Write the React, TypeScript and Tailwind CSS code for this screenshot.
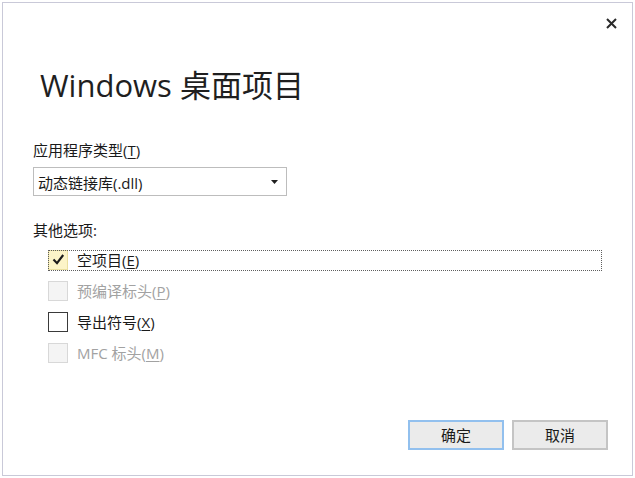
import React from "react";

type Opt = { label: string; key: string; checked?: boolean; disabled?: boolean; focus?: boolean };

const options: Opt[] = [
  { label: "空项目", key: "E", checked: true, focus: true },
  { label: "预编译标头", key: "P", disabled: true },
  { label: "导出符号", key: "X" },
  { label: "MFC 标头", key: "M", disabled: true },
];

function Row({ o }: { o: Opt }) {
  const boxCls = o.checked
    ? "w-[20px] h-[20px] border border-[#eadf9f] bg-[#fcf4c8] flex items-center justify-center"
    : o.disabled
    ? "w-[20px] h-[20px] border border-[#d8d8d8] bg-[#f4f4f4]"
    : "w-[20px] h-[20px] border border-[#3a3a3a] bg-white";
  return (
    <div className="relative h-[21px] flex items-start">
      <div className={boxCls}>
        {o.checked && (
          <svg width="18" height="18" viewBox="0 0 18 18">
            <path d="M4.5 8.6L8 12.2L14.2 4" fill="none" stroke="#1b1b1b" strokeWidth="2.1" />
          </svg>
        )}
      </div>
      <div
        className={
          "ml-[9px] text-[15px] leading-[20px] " + (o.disabled ? "text-[#a2a2a2]" : "text-[#1a1a1a]")
        }
      >
        {o.label}(<span className="underline underline-offset-2">{o.key}</span>)
      </div>
      {o.focus && (
        <div className="absolute left-0 top-0 w-[554px] h-[21px] border border-dotted border-[#5e5e5e] pointer-events-none" />
      )}
    </div>
  );
}

export default function App() {
  return (
    <div className="w-[635px] h-[478px] bg-white p-[2px] font-['Open_Sans','Noto_Sans_CJK_SC',sans-serif] text-[#1a1a1a]">
      <div className="w-[631px] h-[474px] border border-[#c9c9d8] flex flex-col">
        <div className="flex justify-end pt-[15px] pr-[15px]">
          <svg width="11" height="11" viewBox="0 0 11 11">
            <path d="M1 1L10 10M10 1L1 10" stroke="#2a2a2a" strokeWidth="2" />
          </svg>
        </div>
        <div className="px-[30px] flex flex-col">
          <div className="mt-[36px] ml-[7px] text-[31px] leading-[40px] text-[#1f1f1f]">Windows 桌面项目</div>
          <div className="mt-[35px] text-[15px] leading-[20px]">
            应用程序类型(<span className="underline underline-offset-2">T</span>)
          </div>
          <div className="mt-[7px] w-[254px] h-[29px] border border-[#bdbdbd] bg-white flex items-center justify-between pl-[4px] pr-[8px]">
            <span className="text-[15px] leading-[20px] pt-[2px]">动态链接库(.dll)</span>
            <svg width="7" height="4" viewBox="0 0 7 4">
              <polygon points="0,0 7,0 3.5,4" fill="#1f1f1f" />
            </svg>
          </div>
          <div className="mt-[24px] text-[15px] leading-[20px]">其他选项:</div>
          <div className="mt-[10px] ml-[15px] flex flex-col gap-[10px]">
            {options.map((o) => (
              <Row key={o.key} o={o} />
            ))}
          </div>
        </div>
        <div className="mt-[56px] flex justify-end gap-[8px] pr-[24px]">
          <button className="w-[96px] h-[30px] border-2 border-[#92c0ee] bg-[#ebebeb] text-[15px] leading-[20px] text-[#1a1a1a]">
            确定
          </button>
          <button className="w-[96px] h-[30px] border-2 border-[#c4c4c4] bg-[#ebebeb] text-[15px] leading-[20px] text-[#1a1a1a]">
            取消
          </button>
        </div>
      </div>
    </div>
  );
}
